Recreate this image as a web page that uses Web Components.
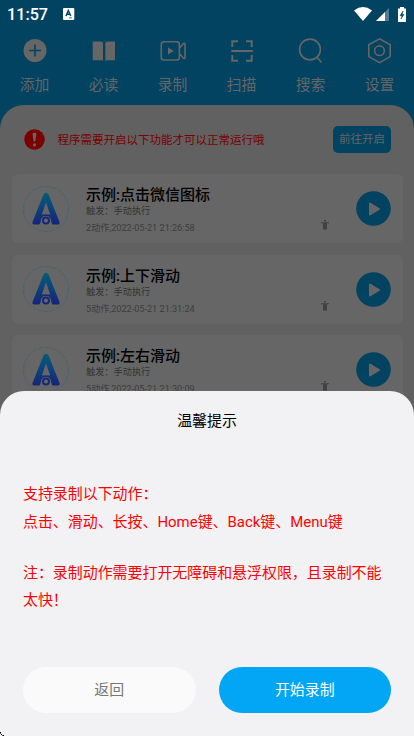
<!DOCTYPE html>
<html lang="zh-CN">
<head>
<meta charset="utf-8">
<title>温馨提示</title>
<style>
html,body{margin:0;width:414px;height:736px;overflow:hidden}
body{font-family:Roboto,"Noto Sans CJK SC",sans-serif}
</style>
</head>
<body>
<phone-screen></phone-screen>
<script>
const define = (name, html) => {
  const t = document.createElement('template');
  t.innerHTML = html;
  customElements.define(name, class extends HTMLElement {
    constructor() {
      super();
      this.attachShadow({mode: 'open'}).appendChild(t.content.cloneNode(true));
    }
  });
};

define('status-bar', `<style>
:host{display:flex;height:28px;box-sizing:border-box;align-items:center;padding:0 8px 0 7px;color:#fff;font-size:16.2px;font-weight:500;line-height:28px}
span{padding-top:1px}
svg{display:block}.a{margin-left:15px}.w{margin-left:auto}.s{margin-left:4px}.b{margin-left:9px}
</style><span>11:57</span>
<svg class="a" width="12" height="12" viewBox="0 0 12 12"><rect width="11.3" height="12" rx="1" fill="#fff"/><path d="M3 8 5.3 2.5 7.8 8M4 6.3h2.8" fill="none" stroke="#014361" stroke-width="1.4"/><path d="M6 9.800h3" stroke="#014361" stroke-width=".7"/></svg>
<svg class="w" width="18" height="14" viewBox="0 0 18 14"><path d="M0 3.4Q9-3.2 18 3.4L9 14z" fill="#fff"/></svg>
<svg class="s" width="13" height="13" viewBox="0 0 13 13"><path d="M0 13 13 0v13z" fill="#4f7d93"/><path d="M0 13 9 4v9z" fill="#fff"/></svg>
<svg class="b" width="8" height="15" viewBox="0 0 8 15"><path d="M2 0h4v1.5h2V15H0V1.5h2z" fill="#fff"/><path d="M5 4 2 8.7h2L3 12l3-4.5H4.3z" fill="#014361" stroke="#014361" stroke-width=".5"/></svg>`);

define('tool-item', `<style>
:host{display:flex;width:69px;flex-direction:column;align-items:center;color:#666;font-size:14.8px;line-height:22px}
::slotted(svg){display:block;width:28px;height:28px;fill:none;stroke:#666;stroke-width:1.6}
.t{margin-top:9px}
</style><slot name="icon"></slot><span class="t"><slot></slot></span>`);

define('notice-bar', `<style>
:host{display:flex;height:27px;align-items:center;padding:21px 23px 0 24px;font-size:11.5px;color:#7b0000}
svg{display:block;margin-right:12.500px}
span{line-height:18px}
b{margin-left:auto;width:58px;height:27px;border-radius:5px;background:#014361;color:#666;font-weight:400;line-height:27px;text-align:center}
</style><svg width="21" height="21" viewBox="0 0 21 21"><circle cx="10.5" cy="10.5" r="10.2" fill="#7b0000"/><path d="M8.500 4.500Q10.5 3.200 12.500 4.500L11.3 12.500H9.700z" fill="#666"/><circle cx="10.5" cy="15.800" r="1.600" fill="#666"/></svg>
<span>程序需要开启以下功能才可以正常运行哦</span><b>前往开启</b>`);

define('app-logo', `<style>:host{display:block;width:46px;height:46px}svg{display:block}</style>
<svg width="46" height="46" viewBox="0 0 46 46"><defs><linearGradient id="g" x1="0" y1="0" x2="0" y2="1"><stop offset="0" stop-color="#045d75"/><stop offset=".5" stop-color="#0c427d"/><stop offset="1" stop-color="#172374"/></linearGradient></defs>
<circle cx="23" cy="23" r="22.5" fill="none" stroke="#3f6373" stroke-width=".8" stroke-dasharray="5 1.500"/>
<path fill="url(#g)" fill-rule="evenodd" d="M20.4 8.8Q23 4.8 25.7 8.8L36.6 36.2Q37 38.5 35.1 38.5H30Q29.2 38.5 28.6 37L27.6 32.5Q25 29.3 23 29.3T18.4 32.5L17.4 37Q17 38.5 15.5 38.5H11Q9 38.5 9.4 36.2ZM23 16.2 18.8 28.5H27.2Z"/>
<path d="M17.5 29.4h11" stroke="#172f75" stroke-width="1.2"/>
<circle cx="23" cy="34.4" r="3" fill="none" stroke="#172877" stroke-width="2"/></svg>`);

define('script-card', `<style>
:host{display:flex;box-sizing:border-box;height:69px;border-radius:6px;background:#666;padding:0 11.5px;align-items:center}
.c{margin-left:17px;display:flex;flex-direction:column;color:#333;font-size:9.2px}
.h{font-size:15px;line-height:22px;font-weight:500;color:#000;padding-top:1px;margin-bottom:-1px}
.t{line-height:12px}.m{line-height:12px;margin-top:5px;color:#3d3d3d;font-size:9.150px}
.p{margin:33px 27.500px 0 auto}svg{display:block}
</style><app-logo></app-logo><div class="c"><span class="h"><slot></slot></span><span class="t">触发：手动执行</span><span class="m"><slot name="meta"></slot></span></div>
<svg class="p" width="8" height="10" viewBox="0 0 8 10"><path d="M3 0h2v1.500H3zM0 2.200h8v1H0zM2 3.200h4V9.500H2z" fill="#3b3b3b" opacity=".85"/></svg>
<svg width="35" height="35" viewBox="0 0 35 35"><circle cx="17.500" cy="17.500" r="17.300" fill="#014361"/><path d="M14 12.500v11L23 18z" fill="#666" stroke="#666" stroke-width="2" stroke-linejoin="round"/></svg>`);

define('record-sheet', `<style>
:host{display:flex;flex-direction:column;box-sizing:border-box;height:345px;border-radius:24px 24px 0 0;background:#f2f2f5;padding:19px 23px 23px;font-size:14.950px}
.h{text-align:center;line-height:22px;color:#000}
.d{margin-top:49px;color:#f00;line-height:27.500px}
.d p{margin:0}.d p+p{margin-top:23.500px}
.b{margin-top:auto;display:grid;grid-template-columns:1fr 1fr;gap:23px;text-align:center;line-height:47px}
.b span{height:46px;border-radius:23px;background:#fafafa;color:#777}.b .go{background:#02a6f4;color:#fff}
</style><div class="h">温馨提示</div><div class="d"><p>支持录制以下动作：<br>点击、滑动、长按、Home键、Back键、Menu键</p><p>注：录制动作需要打开无障碍和悬浮权限，且录制不能太快！</p></div>
<div class="b"><span>返回</span><span class="go">开始录制</span></div>`);

define('corner-mark', `<style>:host{display:block;position:absolute;left:0;bottom:0}svg{display:block}</style>
<svg width="4" height="4" shape-rendering="crispEdges"><path d="M0 0h1v1H0zM1 2h1v1H1zM3 3h1v1H3z" fill="#000"/><path d="M0 1h1v1H0zM2 3h1v1H2z" fill="#666"/></svg>`);

define('phone-screen', `<style>
:host{display:flex;flex-direction:column;position:relative;width:414px;height:736px;overflow:hidden;background:#014361}
nav{display:flex;box-sizing:border-box;height:77px;padding-top:9px;flex:none}
main{height:631px;flex:none;border-radius:24px 24px 0 0;background:#616161}
.list{display:flex;flex-direction:column;gap:11.600px;padding:21px 11.500px 0}
record-sheet{position:absolute;left:0;right:0;bottom:0}
</style><status-bar></status-bar>
<nav>
<tool-item><svg slot="icon" viewBox="0 0 28 28"><circle cx="14" cy="13.500" r="11.500" fill="#666" stroke="none"/><path d="M14 7.500v12M8 13.500h12" stroke="#014361"/></svg>添加</tool-item>
<tool-item><svg slot="icon" viewBox="0 0 28 28"><path d="M2.700 4.500H11Q13 4.500 13 6V24Q12.500 23.300 11 23.300H2.700zM25 4.500h-7.700Q15.300 4.500 15.300 6V24Q15.800 23.300 17.300 23.300H25z" fill="#666" stroke="none"/></svg>必读</tool-item>
<tool-item><svg slot="icon" viewBox="0 0 28 28"><rect x="2.300" y="4.700" width="18" height="18.300" rx="2.500"/><path d="m20.500 11 4-4.500Q26 5.700 26 7.500v12.800Q26 22 24.500 21.200l-4-4.500"/><path d="M9 10.200v7.300L14.800 14z" fill="#666" stroke="none"/></svg>录制</tool-item>
<tool-item><svg slot="icon" viewBox="0 0 28 28"><path d="M4.300 10V4.300H10M18 4.300h5.700V10M4.300 18v5.700H10M18 23.700h5.700V18M3.300 14h21.400" stroke-width="2"/></svg>扫描</tool-item>
<tool-item><svg slot="icon" viewBox="0 0 28 28"><circle cx="13" cy="12.500" r="10.400"/><path d="m19.800 20 4.800 5.500"/></svg>搜索</tool-item>
<tool-item><svg slot="icon" viewBox="0 0 28 28"><path d="m13.500 1.800 10.700 6v11.800l-10.700 6L2.800 19.600V7.800z"/><circle cx="13.500" cy="13.700" r="4.800"/></svg>设置</tool-item>
</nav>
<main><notice-bar></notice-bar><div class="list">
<script-card>示例:点击微信图标<span slot="meta">2动作,2022-05-21 21:26:58</span></script-card>
<script-card>示例:上下滑动<span slot="meta">5动作,2022-05-21 21:31:24</span></script-card>
<script-card>示例:左右滑动<span slot="meta">5动作,2022-05-21 21:30:09</span></script-card>
</div></main>
<record-sheet></record-sheet><corner-mark></corner-mark>`);
</script>
</body>
</html>
